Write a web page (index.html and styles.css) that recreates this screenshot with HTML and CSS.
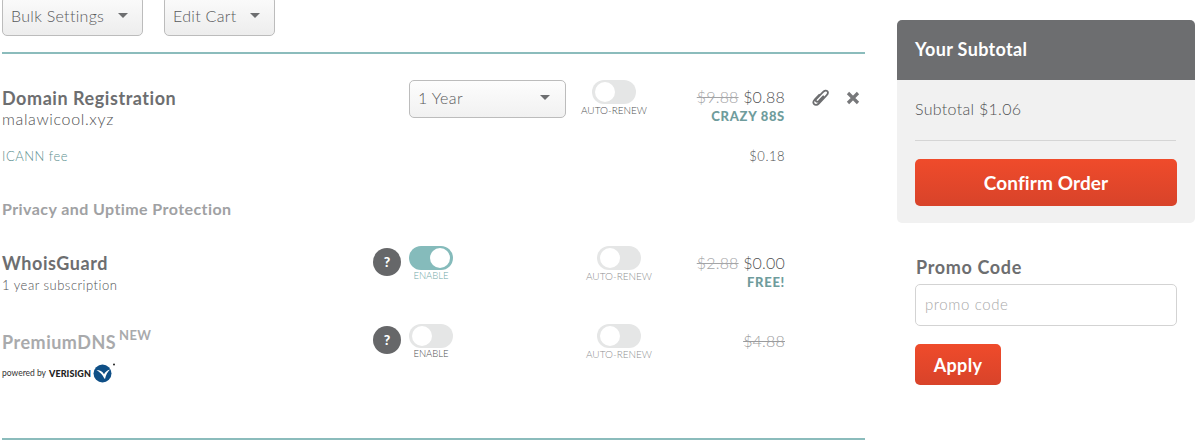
FILE: index.html
```html
<!DOCTYPE html>
<html lang="en">
<head>
<meta charset="utf-8">
<title>Your Cart</title>
<link rel="stylesheet" href="styles.css">
</head>
<body>
<div class="page">
  <main class="cart">
    <div class="toolbar">
      <button class="btn btn-bulk">Bulk Settings <span class="caret"></span></button>
      <button class="btn btn-edit">Edit Cart <span class="caret"></span></button>
    </div>
    <section class="items">
      <div class="row row-domain">
        <div class="name-col name-wide">
          <div class="title">Domain Registration</div>
          <div class="domain">malawicool.xyz</div>
        </div>
        <div class="select"><span>1 Year</span><span class="caret"></span></div>
        <div class="toggle-block renew-first">
          <div class="toggle"></div>
          <div class="toggle-label">AUTO-RENEW</div>
        </div>
        <div class="price price-first">
          <div class="amount"><s>$9.88</s> $0.88</div>
          <div class="promo">CRAZY 88S</div>
        </div>
        <div class="actions">
          <svg class="clip" viewBox="0 0 18 18" width="18" height="18" aria-hidden="true"><path d="M7.200 5.800 2.900 10.300c-1.700 1.800-1.900 3.700-.8 4.900s3 1 4.700-.7l7.500-7.800c1.700-1.800 2-3.500 1-4.500s-2.700-.8-4.400.9L4.700 9.500c-1 1.100-1.200 2.200-.5 2.900s1.700.4 2.700-.6l4.300-4.500" fill="none" stroke="#6d6e70" stroke-width="1.800" stroke-linecap="round"/></svg>
          <svg class="close" viewBox="0 0 14 14" width="14" height="14" aria-hidden="true"><path d="M2 2l10 10M12 2 2 12" fill="none" stroke="#77787a" stroke-width="3.2"/></svg>
        </div>
      </div>
      <div class="fee">
        <span class="fee-name">ICANN fee</span>
        <span class="fee-price">$0.18</span>
      </div>
      <h3 class="section-title">Privacy and Uptime Protection</h3>
      <div class="row row-whois">
        <div class="name-col name-narrow">
          <div class="title">WhoisGuard</div>
          <div class="sub">1 year subscription</div>
        </div>
        <div class="help">?</div>
        <div class="toggle-block enable">
          <div class="toggle on"></div>
          <div class="toggle-label teal">ENABLE</div>
        </div>
        <div class="toggle-block renew">
          <div class="toggle"></div>
          <div class="toggle-label faded">AUTO-RENEW</div>
        </div>
        <div class="price">
          <div class="amount"><s>$2.88</s> $0.00</div>
          <div class="promo">FREE!</div>
        </div>
      </div>
      <div class="row row-dns">
        <div class="name-col name-narrow">
          <div class="title muted">PremiumDNS <sup class="new">NEW</sup></div>
          <div class="powered">powered by <b>VERISIGN</b>
            <svg class="vlogo" viewBox="0 0 24 24" width="24" height="24" aria-hidden="true"><circle cx="10.500" cy="12.500" r="9" fill="#0f4f86"/><path d="M4.500 9c3 0 6 1.200 7.500 4.200 1-2.200 3-3.700 6-4.700-2.500 2.500-4 5.200-5 9.500-1.500-1.200-2-5-8.500-9z" fill="#fff"/><circle cx="22" cy="3.500" r="1" fill="#222"/></svg>
          </div>
        </div>
        <div class="help">?</div>
        <div class="toggle-block enable">
          <div class="toggle"></div>
          <div class="toggle-label">ENABLE</div>
        </div>
        <div class="toggle-block renew">
          <div class="toggle"></div>
          <div class="toggle-label faded">AUTO-RENEW</div>
        </div>
        <div class="price">
          <div class="amount faded-price"><s>$4.88</s></div>
        </div>
      </div>
    </section>
  </main>
  <aside class="side">
    <div class="panel">
      <h2 class="panel-head">Your Subtotal</h2>
      <div class="panel-body">
        <div class="subtotal">Subtotal $1.06</div>
        <button class="cta confirm">Confirm Order</button>
      </div>
    </div>
    <div class="promo-form">
      <label class="promo-label" for="promo">Promo Code</label>
      <input class="promo-input" id="promo" type="text" placeholder="promo code">
      <button class="cta apply">Apply</button>
    </div>
  </aside>
</div>
</body>
</html>
```
FILE: styles.css
```css
* { box-sizing: border-box; }
html, body { margin: 0; height: 442px; overflow: hidden; background: #fff; }
body { font-family: Lato, "Open Sans", sans-serif; color: #6d6e70; }
.page { display: flex; align-items: flex-start; padding-left: 2px; }

.cart { width: 863px; margin-top: -4px; }
.toolbar { display: flex; gap: 21px; height: 58px; border-bottom: 2px solid #8bbcbc; }
.btn {
  display: flex; align-items: center; justify-content: space-between;
  height: 40px; padding: 0 14px 2px 8px; border: 1px solid #bcbcbc; border-radius: 5px;
  background: linear-gradient(#fbfbfb, #ededed); color: #58595b;
  font: 300 16px Lato, sans-serif; letter-spacing: .3px;
}
.btn-bulk { width: 141px; }
.btn-edit { width: 111px; }
.caret { width: 0; height: 0; border: 5px solid transparent; border-top: 5px solid #6d6e70; border-bottom: 0; }

.items { height: 386px; border-bottom: 2px solid #8bbcbc; }
.row { display: flex; align-items: flex-start; }
.row-domain { padding-top: 26px; height: 93px; }
.row-whois { margin-top: 27px; height: 78px; }
.row-dns { height: 70px; }

.name-wide { width: 407px; }
.name-narrow { width: 371px; }
.title { font-size: 18px; font-weight: 700; letter-spacing: .55px; line-height: 22px; }
.row-domain .title { margin-top: 7px; }
.row-whois .title { margin-top: 6px; }
.row-dns .title { margin-top: 7px; letter-spacing: .5px; }
.muted { color: #a9aaac; }
.domain { font-size: 16px; font-weight: 300; line-height: 20px; letter-spacing: .65px; color: #505153; }
.sub { font-size: 13px; line-height: 22px; letter-spacing: .5px; font-weight: 300; color: #505153; }
.new { font-size: 13px; line-height: 0; vertical-align: 9px; margin-left: -2px; letter-spacing: .3px; }
.powered { display: flex; align-items: center; gap: 1px; height: 24px; font-size: 8.500px; color: #333; margin-top: 8px; white-space: pre; }
.powered b { color: #222; font-size: 9px; font-weight: 900; letter-spacing: .1px; }
.vlogo { margin-left: 0; }

.select {
  display: flex; align-items: center; justify-content: space-between;
  width: 157px; height: 38px; padding: 0 15px 3px 8px;
  border: 1px solid #bcbcbc; border-radius: 5px; background: linear-gradient(#fdfdfd, #f1f1f1);
  font-size: 16px; font-weight: 300; letter-spacing: .4px; color: #58595b;
}

.toggle-block { display: flex; flex-direction: column; align-items: center; }
.toggle { position: relative; width: 44px; height: 24px; border-radius: 12px; background: #e5e6e6; }
.toggle::after { content: ""; position: absolute; top: 2px; left: 3px; width: 20px; height: 20px; border-radius: 50%; background: #fff; }
.toggle.on { background: #85bbbb; }
.toggle.on::after { left: 21px; }
.toggle-label { font-size: 10px; font-weight: 300; line-height: 12px; white-space: nowrap; color: #505153; }
.enable .toggle-label { font-size: 9.500px; }
.teal { color: #6fa8a8; }
.faded { color: #8e8f91; }
.renew-first { width: 80px; margin-left: 8px; }
.enable { width: 44px; }
.renew { width: 80px; margin-left: 126px; }

.price { width: 126px; text-align: right; }
.price-first { width: 131px; }
.amount { font-size: 16px; font-weight: 300; line-height: 22px; letter-spacing: .2px; margin-top: 6px; white-space: nowrap; color: #505153; }
.amount s { color: #a4a5a7; }
.faded-price s { color: #9a9b9d; }
.promo { font-size: 13px; line-height: 16px; font-weight: 900; letter-spacing: .7px; color: #6f9c9c; }
.actions { display: flex; align-items: center; gap: 16px; margin-left: 27px; padding-top: 9px; }
.clip, .close { display: block; flex: none; }

.fee { display: flex; justify-content: space-between; width: 783px; font-size: 13px; font-weight: 300; line-height: 18px; letter-spacing: .5px; color: #505153; }
.fee-name { color: #5d8f8f; }
.section-title { margin: 34px 0 0; font-size: 16px; line-height: 20px; font-weight: 700; letter-spacing: .42px; color: #a0a1a3; }

.help { flex: none; width: 28px; height: 28px; margin-top: 2px; margin-right: 8px; border-radius: 50%; background: #666769; color: #fff; font-size: 14px; font-weight: 900; line-height: 28px; text-align: center; }

.side { width: 298px; margin-left: 32px; margin-top: 20px; }
.panel { border-radius: 5px; overflow: hidden; background: #f1f1f1; }
.panel-head { margin: 0; height: 60px; padding: 0 18px; background: #6d6e70; color: #fff; font-size: 18px; font-weight: 700; line-height: 59px; letter-spacing: .35px; }
.panel-body { height: 143px; padding: 0 18px; }
.subtotal { height: 61px; border-bottom: 1px solid #d5d5d5; margin-right: 1px; font-size: 16px; font-weight: 300; line-height: 58px; letter-spacing: .3px; color: #505153; }
.cta { display: block; border: 0; border-radius: 5px; background: linear-gradient(#ef4b2b, #d8432a); color: #fff; font-family: Lato, sans-serif; font-weight: 700; }
.confirm { width: 262px; height: 47px; margin-top: 18px; font-size: 19px; letter-spacing: .1px; }
.promo-form { padding: 33px 18px 0; }
.promo-label { display: block; font-size: 18px; font-weight: 700; line-height: 22px; letter-spacing: .65px; margin-left: 1px; }
.promo-input { display: block; width: 262px; height: 42px; margin-top: 6px; padding: 0 9px 2px; border: 1px solid #d3d3d3; border-radius: 5px; background: #fff; font: 300 15px Lato, sans-serif; letter-spacing: .6px; }
.promo-input::placeholder { color: #a9a9a9; opacity: 1; }
.apply { width: 86px; height: 41px; margin-top: 18px; font-size: 18px; letter-spacing: .3px; }
```
